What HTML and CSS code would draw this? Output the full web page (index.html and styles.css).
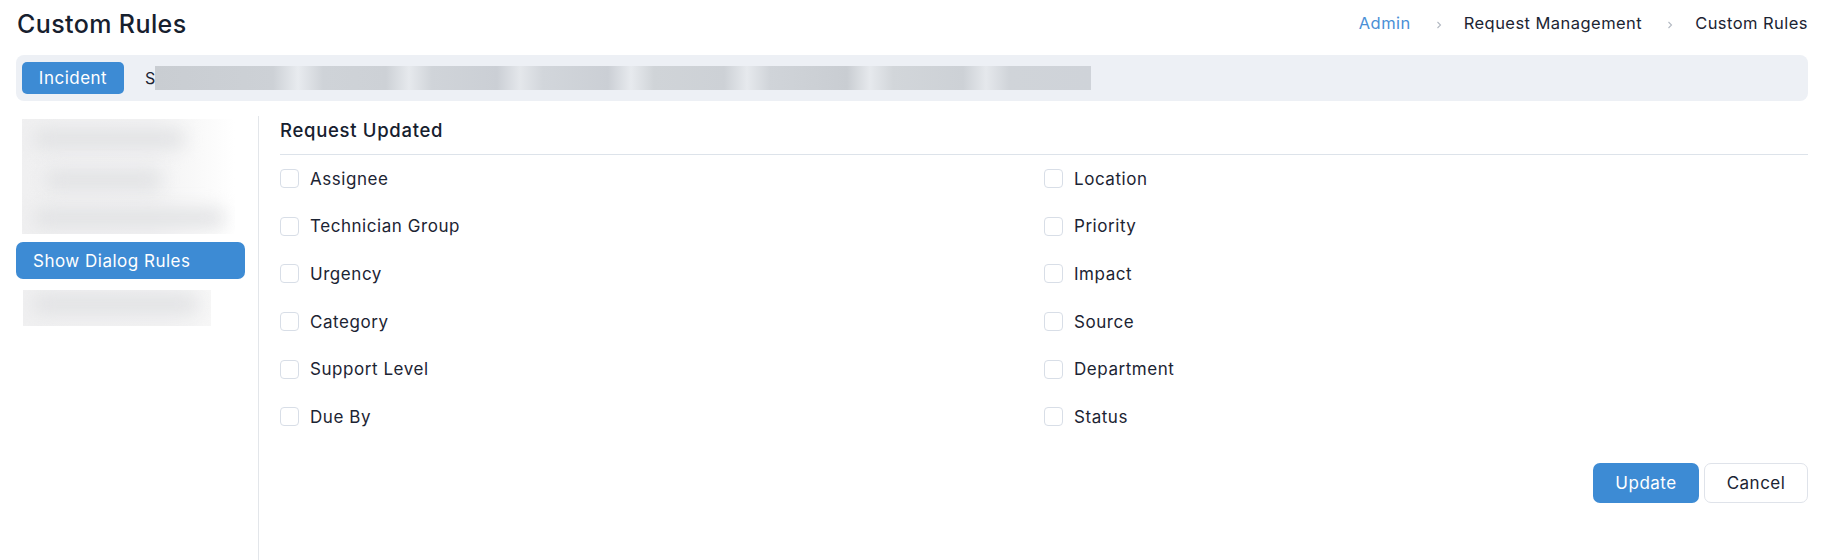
FILE: index.html
```html
<!DOCTYPE html>
<html lang="en">
<head>
<meta charset="utf-8">
<title>Custom Rules</title>
<link rel="stylesheet" href="styles.css">
</head>
<body>
<div class="page">
  <header class="topbar">
    <h1 class="title">Custom Rules</h1>
    <nav class="crumbs">
      <a class="crumb link" href="#">Admin</a>
      <svg class="sep" viewBox="0 0 6 10" width="6" height="10"><path d="M1.5 2l3 3-3 3" fill="none" stroke="#b3b9c2" stroke-width="1.1"/></svg>
      <span class="crumb">Request Management</span>
      <svg class="sep" viewBox="0 0 6 10" width="6" height="10"><path d="M1.5 2l3 3-3 3" fill="none" stroke="#b3b9c2" stroke-width="1.1"/></svg>
      <span class="crumb">Custom Rules</span>
    </nav>
  </header>

  <div class="tabs">
    <button class="tab active">Incident</button>
    <span class="tab-text">S</span>
    <div class="blur-strip"></div>
  </div>

  <div class="main">
    <aside class="side">
      <div class="blur-block top">
        <span class="smudge s1"></span>
        <span class="smudge s2"></span>
        <span class="smudge s3"></span>
      </div>
      <button class="side-item active">Show Dialog Rules</button>
      <div class="blur-block bottom">
        <span class="smudge s4"></span>
      </div>
    </aside>

    <section class="content">
      <h2 class="section-title">Request Updated</h2>
      <div class="grid">
        <label class="opt"><span class="box"></span><span class="lbl">Assignee</span></label>
        <label class="opt"><span class="box"></span><span class="lbl">Location</span></label>
        <label class="opt"><span class="box"></span><span class="lbl">Technician Group</span></label>
        <label class="opt"><span class="box"></span><span class="lbl">Priority</span></label>
        <label class="opt"><span class="box"></span><span class="lbl">Urgency</span></label>
        <label class="opt"><span class="box"></span><span class="lbl">Impact</span></label>
        <label class="opt"><span class="box"></span><span class="lbl">Category</span></label>
        <label class="opt"><span class="box"></span><span class="lbl">Source</span></label>
        <label class="opt"><span class="box"></span><span class="lbl">Support Level</span></label>
        <label class="opt"><span class="box"></span><span class="lbl">Department</span></label>
        <label class="opt"><span class="box"></span><span class="lbl">Due By</span></label>
        <label class="opt"><span class="box"></span><span class="lbl">Status</span></label>
      </div>
      <div class="actions">
        <button class="btn primary">Update</button>
        <button class="btn ghost">Cancel</button>
      </div>
    </section>
  </div>
</div>
</body>
</html>
```

FILE: styles.css
```css
* { box-sizing: border-box; }

html, body {
  margin: 0;
  padding: 0;
  background: #ffffff;
}

body {
  font-family: Inter, "Noto Sans", "Liberation Sans", sans-serif;
  color: #1c2433;
  height: 560px;
  overflow: hidden;
}

.page {
  padding: 0 20px 0 16px;
  height: 560px;
  display: flex;
  flex-direction: column;
}

.topbar {
  height: 48px;
  display: flex;
  align-items: center;
  justify-content: space-between;
  margin-bottom: 7px;
}

.title {
  margin: 0;
  padding-left: 1px;
  font-size: 25px;
  font-weight: 500;
  letter-spacing: 0.4px;
  color: #16202e;
  line-height: 30px;
}

.crumbs {
  display: flex;
  align-items: center;
  font-size: 16.5px;
  line-height: 20px;
  margin-top: -2px;
}

.crumb {
  color: #1c2433;
  text-decoration: none;
  letter-spacing: 0.45px;
}

.crumb.link { color: #4a8fd6; }

.sep {
  margin: 3px 22px 0 25px;
}

.tabs {
  height: 46px;
  background: #edf0f5;
  border-radius: 8px;
  display: flex;
  align-items: center;
  padding: 0 6px;
}

.tab {
  border: 0;
  font: inherit;
  width: 102px;
  height: 32px;
  border-radius: 5px;
  font-size: 17px;
  letter-spacing: 0.5px;
}

.tab.active {
  background: #3d8bd4;
  color: #ffffff;
}

.tab-text {
  margin-left: 21px;
  margin-right: 0;
  font-size: 16px;
  color: #1c2433;
}

.blur-strip {
  width: 936px;
  height: 24px;
  background: linear-gradient(90deg,
    #c9cdd2 0px, #cdd1d6 118px, #e8ebef 143px, #cfd3d8 168px,
    #cdd1d6 231px, #e6e9ed 254px, #d0d4d9 277px,
    #cbcfd5 342px, #e4e7eb 365px, #d2d6db 388px,
    #cbcfd5 453px, #e7eaee 476px, #d0d4d8 499px,
    #cdd1d6 569px, #e6e9ed 592px, #d0d4d9 615px,
    #c9cdd2 692px, #e6e9ed 715px, #d2d6da 738px,
    #cdd1d6 808px, #e5e8ec 831px, #d0d4d9 854px,
    #cfd3d9 936px);
}

.main {
  flex: 1;
  display: flex;
  margin-top: 15px;
}

.side {
  width: 243px;
  border-right: 1px solid #e3e6ea;
  padding: 3px 13px 0 0;
  display: flex;
  flex-direction: column;
  align-items: flex-start;
}

.blur-block {
  position: relative;
  overflow: hidden;
  margin-left: 6px;
}

.blur-block.top {
  width: 213px;
  height: 115px;
  background: linear-gradient(90deg, #f0f0f1 0%, #f2f2f3 60%, #fafafa 85%, #ffffff 100%);
}

.blur-block.bottom {
  width: 188px;
  height: 36px;
  margin-left: 7px;
  margin-top: 11px;
  background: linear-gradient(90deg, #f0f0f1 0%, #f2f2f3 75%, #f7f7f7 100%);
}

.smudge {
  position: absolute;
  height: 18px;
  background: #e0e1e3;
  filter: blur(9px);
  border-radius: 6px;
}

.s1 { left: 12px; top: 11px; width: 150px; }
.s2 { left: 24px; top: 52px; width: 115px; }
.s3 { left: 12px; top: 90px; width: 190px; }
.s4 { left: 10px; top: 5px; width: 165px; }

.side-item {
  border: 0;
  font: inherit;
  text-align: left;
  margin-top: 8px;
  width: 229px;
  height: 37px;
  border-radius: 7px;
  padding: 0 0 0 17px;
  font-size: 17px;
  letter-spacing: 0.5px;
}

.side-item.active {
  background: #3d8bd4;
  color: #ffffff;
}

.content {
  flex: 1;
  padding-left: 21px;
  display: flex;
  flex-direction: column;
}

.section-title {
  margin: 0;
  font-size: 18.5px;
  font-weight: 500;
  letter-spacing: 0.7px;
  line-height: 24px;
  padding: 2px 0 12px;
  border-bottom: 1px solid #dde3ea;
  color: #16202e;
}

.grid {
  display: grid;
  grid-template-columns: 1fr 1fr;
  grid-auto-rows: 47.6px;
}

.opt {
  display: flex;
  align-items: center;
}

.box {
  width: 19px;
  height: 19px;
  border: 1px solid #d8dee7;
  border-radius: 4px;
  background: #ffffff;
  margin-right: 11px;
  flex: none;
}

.lbl {
  font-size: 17px;
  letter-spacing: 0.55px;
  color: #1c2433;
}

.actions {
  display: flex;
  justify-content: flex-end;
  gap: 5px;
  margin-top: 22px;
}

.btn {
  font: inherit;
  font-size: 17px;
  height: 40px;
  border-radius: 7px;
  letter-spacing: 0.5px;
}

.btn.primary {
  width: 106px;
  border: 0;
  background: #3d8bd4;
  color: #ffffff;
}

.btn.ghost {
  width: 104px;
  border: 1px solid #dfe3ea;
  background: #ffffff;
  color: #1c2433;
}
```
